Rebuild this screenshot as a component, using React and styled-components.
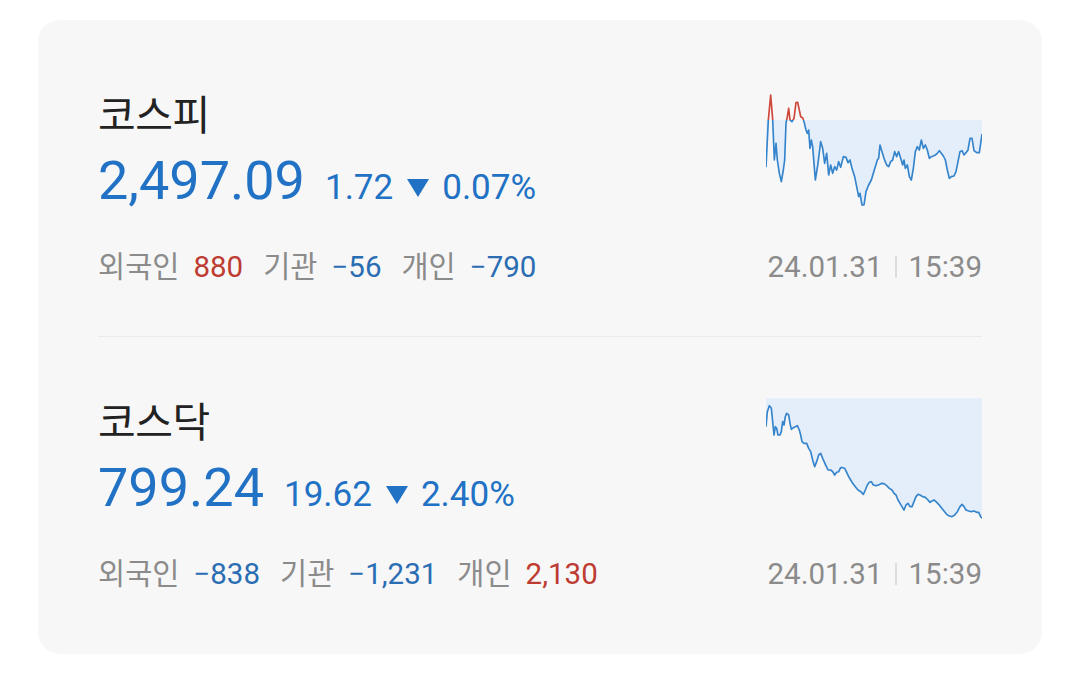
import React from "react";
import styled, { createGlobalStyle } from "styled-components";

const GlobalStyle = createGlobalStyle`
  body {
    margin: 0;
    background: #ffffff;
    font-family: "Roboto", "Noto Sans CJK KR", sans-serif;
  }
`;

const BLUE = "#2171c4";
const RED = "#bd3b31";
const GRAY = "#8b8b8b";

const Card = styled.div`
  width: 1004px;
  margin: 20px 0 0 38px;
  padding: 10px 60px 11px;
  box-sizing: border-box;
  background: #f7f7f7;
  border-radius: 22px;
`;

const Section = styled.section`
  display: grid;
  grid-template-columns: 1fr 216px;
  padding: 62px 0 49px;
`;

const Divider = styled.div`
  height: 1px;
  background: #ebebeb;
`;

const Left = styled.div`
  display: flex;
  flex-direction: column;
`;

const Right = styled.div`
  display: flex;
  flex-direction: column;
`;

const Title = styled.div`
  font-size: 41px;
  line-height: 48px;
  color: #222222;
  letter-spacing: -0.5px;
`;

const PriceRow = styled.div`
  display: flex;
  align-items: baseline;
  margin-top: 9px;
  line-height: 64px;
  color: ${BLUE};
`;

const Price = styled.span`
  font-size: 54px;
`;

const Change = styled.span`
  font-size: 35px;
  margin-left: 20px;
  display: flex;
  align-items: center;
`;

const Down = styled.span`
  display: inline-block;
  width: 0;
  height: 0;
  margin: 0 13px 0 14px;
  border-left: 11px solid transparent;
  border-right: 11px solid transparent;
  border-top: 18px solid ${BLUE};
`;

const FlowRow = styled.div`
  display: flex;
  margin-top: 27px;
  font-size: 29.5px;
  line-height: 40px;
`;

const Label = styled.span`
  color: ${GRAY};
  margin-right: 14px;
`;

const Value = styled.span`
  color: ${(p) => (p.up ? RED : "#2a6db3")};
  margin-right: 20px;
`;

const Chart = styled.svg`
  display: block;
  width: 216px;
  height: 140px;
  margin-top: -12px;
`;

const DateRow = styled.div`
  margin-top: auto;
  display: flex;
  justify-content: flex-end;
  align-items: center;
  font-size: 29.5px;
  line-height: 40px;
  color: ${GRAY};
`;

const Sep = styled.span`
  width: 2px;
  height: 22px;
  background: #dedede;
  margin: 0 12px;
`;

const kospi = [
  [48, 262], [55, 120], [62, 45], [68, 118], [73, 240], [78, 190], [82, 240], [88, 280],
  [94, 305], [100, 270], [104, 240], [108, 130], [112, 110], [116, 85], [120, 120], [126, 125],
  [132, 115], [138, 68], [143, 67], [148, 90], [152, 110], [158, 113], [162, 125], [168, 150],
  [172, 160], [176, 150], [180, 205], [184, 180], [188, 200], [192, 250], [196, 300], [204, 250],
  [212, 185], [218, 205], [224, 250], [230, 220], [236, 285], [242, 255], [248, 280], [254, 260],
  [260, 270], [266, 245], [272, 262], [280, 230], [288, 232], [294, 248], [300, 240], [306, 265],
  [314, 290], [320, 320], [326, 350], [330, 340], [336, 375], [342, 375], [348, 335], [356, 315],
  [364, 300], [370, 280], [376, 260], [382, 240], [386, 235], [390, 195], [396, 215], [402, 235],
  [410, 255], [416, 260], [422, 245], [428, 240], [434, 215], [440, 230], [446, 215], [452, 235],
  [458, 255], [462, 240], [466, 265], [472, 255], [478, 290], [484, 300], [490, 265], [496, 215],
  [502, 200], [508, 210], [514, 180], [520, 205], [526, 195], [532, 210], [538, 235], [544, 230],
  [550, 228], [556, 225], [562, 220], [568, 212], [574, 220], [580, 228], [586, 240], [592, 270],
  [598, 295], [604, 290], [612, 288], [618, 275], [624, 245], [630, 215], [636, 212], [642, 225],
  [648, 218], [654, 210], [660, 175], [666, 175], [672, 212], [680, 218], [688, 218], [696, 162],
];

const kosdaq = [
  [48, 125], [52, 80], [58, 62], [64, 70], [68, 110], [72, 150], [76, 125], [80, 130],
  [84, 150], [90, 150], [94, 140], [98, 110], [102, 120], [106, 95], [110, 85], [116, 90],
  [120, 115], [124, 133], [130, 128], [136, 125], [142, 122], [148, 135], [152, 150], [156, 170],
  [162, 175], [170, 175], [176, 190], [182, 200], [188, 225], [194, 245], [200, 230], [206, 210],
  [212, 205], [218, 220], [226, 238], [234, 255], [242, 255], [248, 260], [254, 270], [260, 262],
  [266, 260], [272, 248], [278, 248], [284, 250], [290, 262], [296, 275], [302, 285], [308, 295],
  [316, 305], [324, 315], [332, 320], [340, 328], [346, 315], [352, 300], [358, 292], [364, 290],
  [370, 300], [378, 302], [386, 300], [394, 295], [402, 296], [410, 302], [418, 310], [426, 315],
  [432, 325], [438, 330], [444, 345], [450, 355], [456, 365], [462, 375], [468, 360], [474, 355],
  [480, 365], [486, 365], [492, 350], [498, 335], [504, 328], [510, 330], [518, 335], [526, 337],
  [534, 345], [540, 352], [546, 348], [552, 345], [558, 350], [566, 358], [574, 368], [582, 378],
  [590, 388], [598, 393], [606, 395], [614, 390], [622, 380], [630, 365], [636, 358], [642, 365],
  [648, 375], [656, 378], [664, 380], [672, 378], [680, 382], [686, 382], [692, 395], [696, 400],
];

const toLine = (pts) => pts.map(([x, y], i) => `${i ? "L" : "M"}${x} ${y}`).join(" ");

const Spark = ({ points, base, top }) => {
  const first = points[0][0];
  const last = points[points.length - 1][0];
  const clipped = points.map(([x, y]) => [x, Math.max(y, base)]);
  const area = `M${first} ${base} ${clipped.map(([x, y]) => `L${x} ${y}`).join(" ")} L${last} ${base} Z`;
  return (
    <Chart viewBox={`48 ${top} 648 420`} preserveAspectRatio="none">
      <defs>
        <clipPath id={`above-${top}`}>
          <rect x="0" y="-100" width="800" height={base + 100} />
        </clipPath>
        <clipPath id={`below-${top}`}>
          <rect x="0" y={base} width="800" height="600" />
        </clipPath>
      </defs>
      <path d={area} fill="#e3eefa" />
      <path d={toLine(points)} fill="none" stroke="#3584cc" strokeWidth="5" strokeLinejoin="round" clipPath={`url(#below-${top})`} />
      <path d={toLine(points)} fill="none" stroke="#cf473a" strokeWidth="5" strokeLinejoin="round" clipPath={`url(#above-${top})`} />
    </Chart>
  );
};

const markets = [
  {
    name: "코스피",
    price: "2,497.09",
    diff: "1.72",
    rate: "0.07%",
    flows: [["외국인", "880", true], ["기관", "−56", false], ["개인", "−790", false]],
    points: kospi,
    base: 120,
    top: 0,
  },
  {
    name: "코스닥",
    price: "799.24",
    diff: "19.62",
    rate: "2.40%",
    flows: [["외국인", "−838", false], ["기관", "−1,231", false], ["개인", "2,130", true]],
    points: kosdaq,
    base: 40,
    top: 6,
  },
];

const Market = ({ m }) => (
  <Section>
    <Left>
      <Title>{m.name}</Title>
      <PriceRow>
        <Price>{m.price}</Price>
        <Change>
          {m.diff}
          <Down />
          {m.rate}
        </Change>
      </PriceRow>
      <FlowRow>
        {m.flows.map(([label, value, up]) => (
          <React.Fragment key={label}>
            <Label>{label}</Label>
            <Value up={up}>{value}</Value>
          </React.Fragment>
        ))}
      </FlowRow>
    </Left>
    <Right>
      <Spark points={m.points} base={m.base} top={m.top} />
      <DateRow>
        24.01.31
        <Sep />
        15:39
      </DateRow>
    </Right>
  </Section>
);

export default function App() {
  return (
    <>
      <GlobalStyle />
      <Card>
        <Market m={markets[0]} />
        <Divider />
        <Market m={markets[1]} />
      </Card>
    </>
  );
}
